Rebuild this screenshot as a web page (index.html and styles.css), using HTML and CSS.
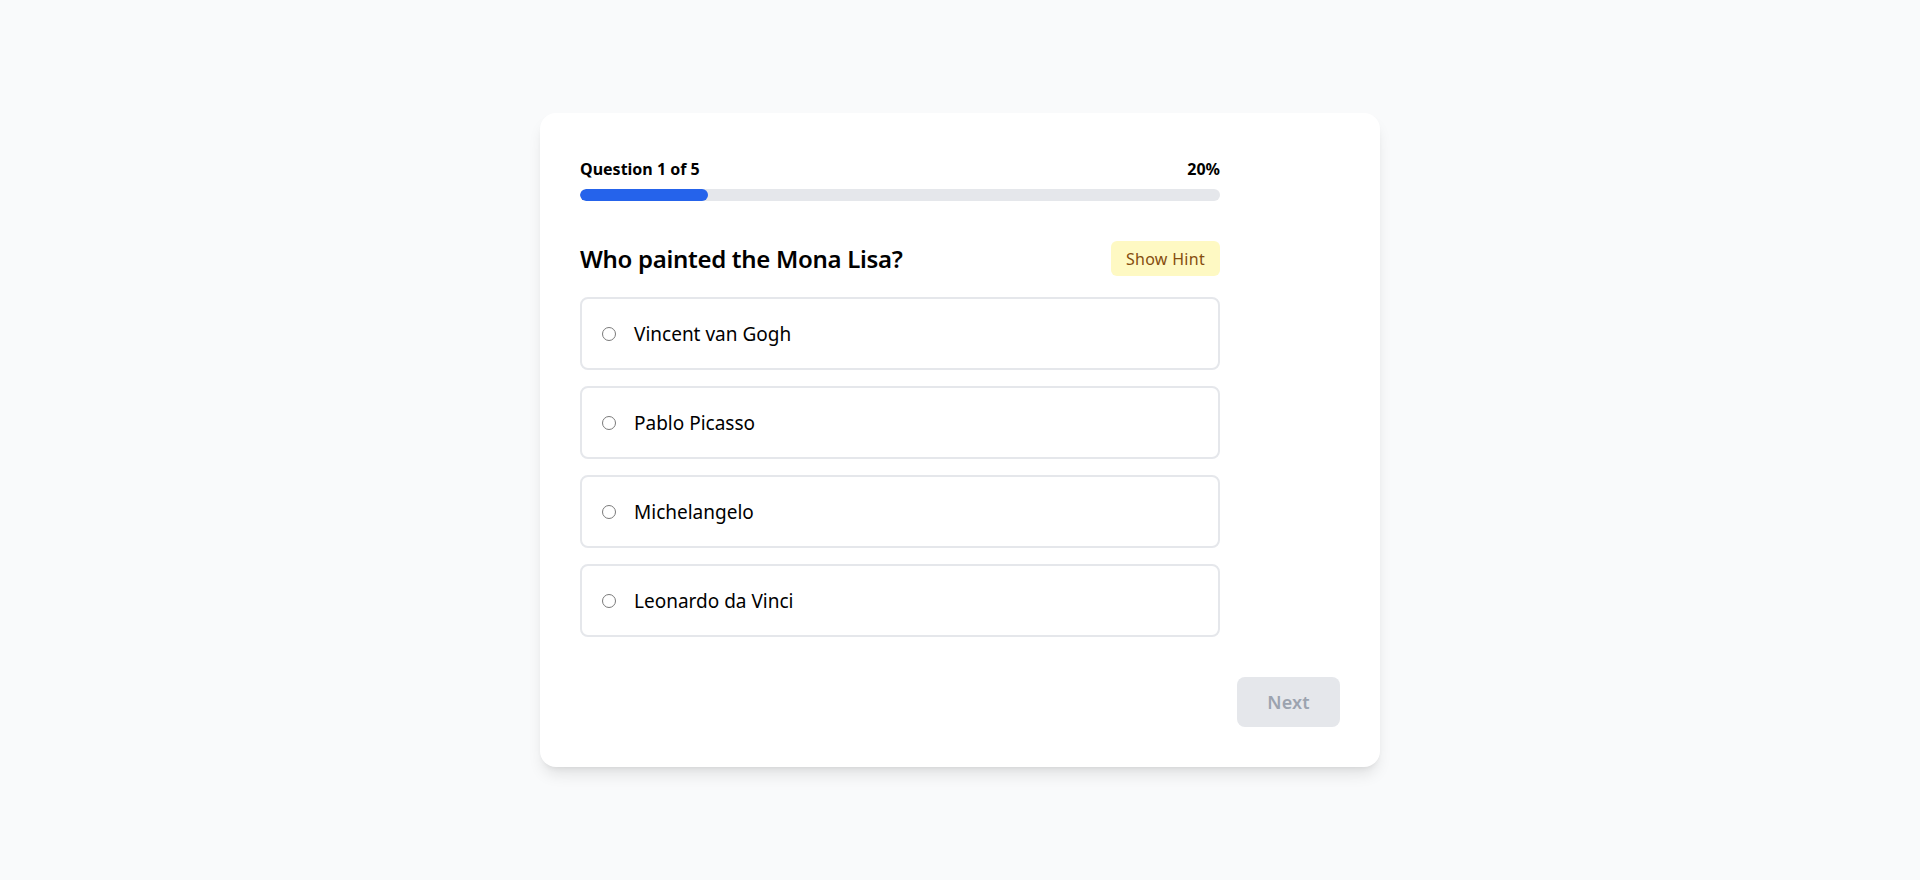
FILE: index.html
```html
<!DOCTYPE html>
<html lang="en">
<head>
<meta charset="utf-8">
<title>Quiz</title>
<link rel="stylesheet" href="styles.css">
</head>
<body>
<main class="page">
  <section class="card">
    <div class="quiz">
      <div class="progress-head">
        <span class="progress-label">Question 1 of 5</span>
        <span class="progress-label">20%</span>
      </div>
      <div class="progress-track"><div class="progress-fill" style="width:20%"></div></div>

      <div class="question-row">
        <h2 class="question">Who painted the Mona Lisa?</h2>
        <button class="hint-btn" type="button">Show Hint</button>
      </div>

      <div class="options">
        <label class="option"><input class="radio" type="radio" name="answer"><span class="option-text">Vincent van Gogh</span></label>
        <label class="option"><input class="radio" type="radio" name="answer"><span class="option-text">Pablo Picasso</span></label>
        <label class="option"><input class="radio" type="radio" name="answer"><span class="option-text">Michelangelo</span></label>
        <label class="option"><input class="radio" type="radio" name="answer"><span class="option-text">Leonardo da Vinci</span></label>
      </div>
    </div>
    <div class="footer">
      <button class="next-btn" type="button" disabled>Next</button>
    </div>
  </section>
</main>
</body>
</html>
```

FILE: styles.css
```css
* { box-sizing: border-box; }

html, body {
  margin: 0;
  padding: 0;
}

body {
  background: #f9fafb;
  font-family: "Noto Sans", "Open Sans", "Liberation Sans", sans-serif;
  color: #111827;
}

.page {
  min-height: 880px;
  display: flex;
  align-items: center;
  justify-content: center;
}

.card {
  width: 840px;
  background: #ffffff;
  border-radius: 16px;
  padding: 40px;
  box-shadow: 0 10px 15px -3px rgba(0, 0, 0, 0.1), 0 4px 6px -4px rgba(0, 0, 0, 0.1);
}

.quiz {
  width: 640px;
}

.progress-head {
  display: flex;
  justify-content: space-between;
  align-items: flex-end;
  height: 24px;
  margin-bottom: 12px;
}

.progress-label {
  font-size: 16px;
  line-height: 16px;
  font-weight: 700;
  color: #000000;
}

.progress-track {
  height: 12px;
  background: #e5e7eb;
  border-radius: 9999px;
  overflow: hidden;
}

.progress-fill {
  height: 100%;
  background: #2563eb;
  border-radius: 9999px;
}

.question-row {
  display: flex;
  justify-content: space-between;
  align-items: center;
  margin-top: 40px;
  margin-bottom: 21px;
  height: 35px;
}

.question {
  margin: 0;
  font-size: 24px;
  font-weight: 600;
  color: #000000;
  line-height: 32px;
  letter-spacing: -0.3px;
}

.hint-btn {
  height: 35px;
  width: 109px;
  padding: 0;
  border: none;
  border-radius: 6px;
  background: #fef9c3;
  color: #854d0e;
  font-family: inherit;
  font-size: 16px;
  letter-spacing: 0.3px;
  cursor: pointer;
}

.options {
  display: flex;
  flex-direction: column;
  gap: 16px;
}

.option {
  display: flex;
  align-items: center;
  height: 73px;
  padding: 0 20px;
  border: 2px solid #e5e7eb;
  border-radius: 8px;
  background: #ffffff;
  cursor: pointer;
}

.radio {
  appearance: none;
  -webkit-appearance: none;
  width: 14px;
  height: 14px;
  margin: 0 18px 0 0;
  border: 1.5px solid #7a7a7a;
  border-radius: 50%;
  background: #ffffff;
  flex-shrink: 0;
}

.option-text {
  font-size: 19px;
  color: #000000;
  line-height: 28px;
}

.footer {
  display: flex;
  justify-content: flex-end;
  margin-top: 40px;
}

.next-btn {
  width: 103px;
  height: 50px;
  border: none;
  border-radius: 8px;
  background: #e5e7eb;
  color: #9ca3af;
  font-family: inherit;
  font-size: 18px;
  font-weight: 600;
  letter-spacing: 0.2px;
}
```
